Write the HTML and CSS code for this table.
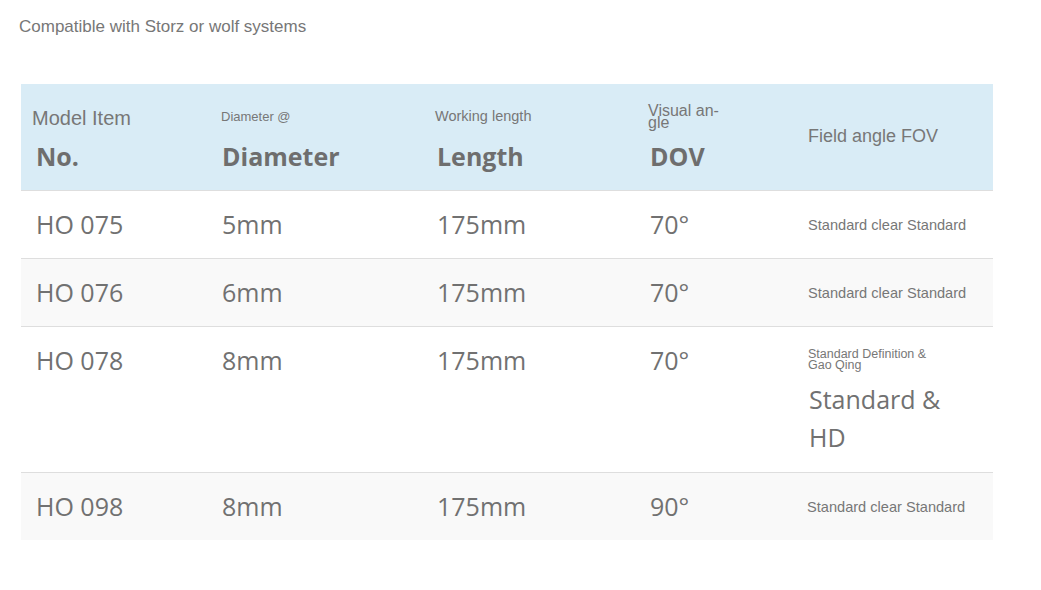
FILE: index.html
```html
<!DOCTYPE html>
<html lang="en">
<head>
<meta charset="utf-8">
<title>Scopes</title>
<link rel="stylesheet" href="styles.css">
</head>
<body>
<div class="page">
  <p class="intro">Compatible with Storz or wolf systems</p>
  <table class="spec">
    <colgroup>
      <col class="c1"><col class="c2"><col class="c3"><col class="c4"><col class="c5">
    </colgroup>
    <thead>
      <tr class="head">
        <th><div class="lbl lbl-model">Model Item</div><div class="big">No.</div></th>
        <th><div class="lbl lbl-sm">Diameter @</div><div class="big">Diameter</div></th>
        <th><div class="lbl lbl-md">Working length</div><div class="big">Length</div></th>
        <th><div class="lbl lbl-vis">Visual an&shy;gle</div><div class="big">DOV</div></th>
        <th class="fov"><div class="lbl-fov">Field angle FOV</div></th>
      </tr>
    </thead>
    <tbody>
      <tr>
        <td>HO 075</td><td>5mm</td><td>175mm</td><td>70°</td>
        <td class="last"><div class="std">Standard clear Standard</div></td>
      </tr>
      <tr class="alt">
        <td>HO 076</td><td>6mm</td><td>175mm</td><td>70°</td>
        <td class="last"><div class="std">Standard clear Standard</div></td>
      </tr>
      <tr>
        <td>HO 078</td><td>8mm</td><td>175mm</td><td>70°</td>
        <td class="last"><div class="tiny">Standard Definition &amp; Gao Qing</div><div class="hd">Standard &amp; HD</div></td>
      </tr>
      <tr class="alt">
        <td>HO 098</td><td>8mm</td><td>175mm</td><td>90°</td>
        <td class="last"><div class="std std-b">Standard clear Standard</div></td>
      </tr>
    </tbody>
  </table>
</div>
</body>
</html>
```
FILE: styles.css
```css
html, body {
  margin: 0;
  padding: 0;
  background: #ffffff;
}

.page {
  padding: 17px 0 0 19px;
}

.intro {
  margin: 0;
  font-family: "Liberation Sans", Arial, sans-serif;
  font-size: 17px;
  line-height: 20px;
  color: #777777;
}

.spec {
  margin: 47px 0 0 2px;
  width: 972px;
  border-collapse: collapse;
  table-layout: fixed;
  font-family: "Open Sans", sans-serif;
  color: #717171;
}

.c1 { width: 187px; }
.c2 { width: 215px; }
.c3 { width: 213px; }
.c4 { width: 160px; }
.c5 { width: 197px; }

.head {
  height: 106px;
  background: #d9ecf6;
}

.head th {
  text-align: left;
  vertical-align: bottom;
  font-weight: normal;
  padding: 0 10px 16px 14px;
}

.head th:first-child {
  padding-left: 15px;
}

.lbl {
  font-family: "Liberation Sans", Arial, sans-serif;
  color: #777777;
  margin-left: -2px;
}

.lbl-model {
  font-size: 20px;
  line-height: 24px;
  margin: 0 0 8px -4px;
}

.lbl-sm {
  font-size: 13px;
  line-height: 16px;
  margin-bottom: 13px;
  margin-left: -1px;
}

.lbl-md {
  font-size: 14.5px;
  line-height: 17px;
  margin-bottom: 13px;
}

.lbl-vis {
  font-size: 16px;
  line-height: 12.5px;
  width: 76px;
  margin-bottom: 8px;
}

.big {
  font-family: "Open Sans", sans-serif;
  font-weight: 700;
  font-size: 25px;
  line-height: 36px;
  color: #6e6e6e;
}

.head th.fov {
  vertical-align: top;
  padding: 41px 20px 0 12px;
}

.lbl-fov {
  font-family: "Liberation Sans", Arial, sans-serif;
  font-size: 18px;
  line-height: 22px;
  color: #777777;
}

tbody tr {
  border-top: 1px solid #dedede;
}

tbody tr.alt {
  background: #f9f9f9;
}

tbody td {
  vertical-align: top;
  padding: 15px 10px 16px 14px;
  font-size: 25px;
  line-height: 36px;
}

tbody td:first-child {
  padding-left: 15px;
}

tbody td.last {
  padding: 15px 20px 16px 12px;
}

.std {
  font-family: "Liberation Sans", Arial, sans-serif;
  font-size: 14.6px;
  line-height: 20px;
  margin-top: 9px;
  color: #777777;
}

.std-b {
  margin-left: -1px;
}

.tiny {
  font-family: "Liberation Sans", Arial, sans-serif;
  font-size: 12.5px;
  line-height: 11px;
  width: 122px;
  margin-top: 7px;
  color: #777777;
}

.hd {
  font-size: 25px;
  line-height: 38px;
  margin: 9px 0 0 1px;
  color: #717171;
}
```
